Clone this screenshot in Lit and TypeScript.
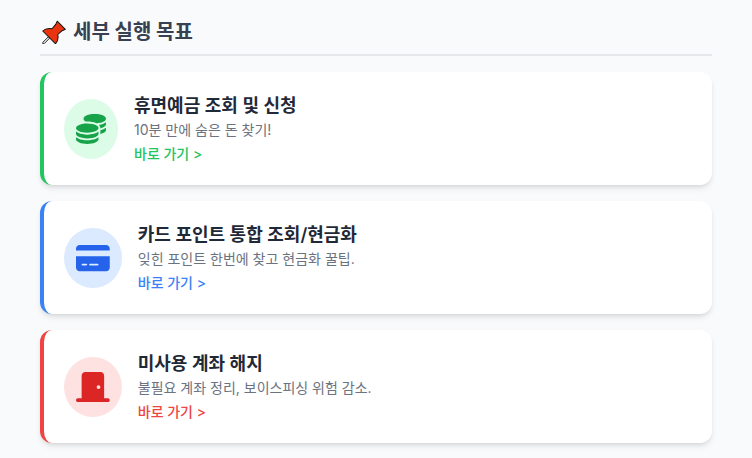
import { LitElement, html, css, svg } from 'lit'
import { customElement } from 'lit/decorators.js'

const coins = svg`<path d="M512 80c0 18-14.300 34.600-38.400 48c-29.100 16.100-72.500 27.500-122.300 30.900c-3.700-1.800-7.400-3.500-11.300-5C300.600 137.400 248.200 128 192 128c-8.300 0-16.400 .2-24.500 .6l-1.100-.6C142.300 114.600 128 98 128 80c0-44.200 86-80 192-80S512 35.800 512 80zM160.700 161.100c10.200-.7 20.700-1.100 31.300-1.100c62.200 0 117.400 12.300 152.500 31.400C369.300 204.900 384 221.700 384 240c0 4-.7 7.900-2.100 11.700c-4.600 13.200-17 25.300-35 35.500c0 0 0 0 0 0c-.1 .1-.3 .1-.4 .2l0 0 0 0c-.3 .2-.6 .3-.9 .5c-35 19.400-90.800 32-153.600 32c-59.600 0-112.900-11.300-148.200-29.100c-1.900-.9-3.700-1.900-5.500-2.900C14.300 274.600 0 258 0 240c0-34.800 53.400-64.500 128-75.400c10.500-1.500 21.400-2.700 32.700-3.500zM416 240c0-21.900-10.600-39.900-24.100-53.400c28.300-4.400 54.200-11.400 76.200-20.500c16.300-6.800 31.500-15.200 43.900-25.500V176c0 19.300-16.500 37.100-43.800 50.900c-14.600 7.400-32.400 13.700-52.400 18.500c.1-1.800 .2-3.500 .2-5.300zm-32 96c0 18-14.300 34.600-38.400 48c-1.800 1-3.600 1.900-5.500 2.900C304.900 404.700 251.600 416 192 416c-62.800 0-118.600-12.600-153.600-32C14.300 370.600 0 354 0 336V300.600c12.500 10.300 27.600 18.700 43.900 25.500C83.400 342.600 135.800 352 192 352s108.600-9.400 148.100-25.900c7.800-3.200 15.300-6.900 22.400-10.900c6.100-3.400 11.800-7.200 17.200-11.200c1.500-1.100 2.900-2.300 4.300-3.400V304v5.700V336zm32 0V304 278.100c19-4.200 36.500-9.500 52.100-16c16.300-6.800 31.500-15.200 43.900-25.500V272c0 10.500-5 21-14.900 30.900c-16.300 16.300-45 29.700-81.300 38.400c.1-1.700 .2-3.500 .2-5.300zM192 448c56.200 0 108.600-9.400 148.100-25.900c16.300-6.800 31.500-15.200 43.900-25.500V432c0 44.200-86 80-192 80S0 476.200 0 432V396.600c12.500 10.300 27.600 18.700 43.900 25.500C83.400 438.600 135.800 448 192 448z"/>`

const card = svg`<path d="M64 32C28.700 32 0 60.700 0 96v32H576V96c0-35.300-28.700-64-64-64H64zM576 224H0V416c0 35.300 28.700 64 64 64H512c35.300 0 64-28.700 64-64V224zM112 352h64c8.800 0 16 7.200 16 16s-7.200 16-16 16H112c-8.800 0-16-7.200-16-16s7.200-16 16-16zm112 16c0-8.800 7.200-16 16-16H368c8.800 0 16 7.200 16 16s-7.200 16-16 16H240c-8.800 0-16-7.200-16-16z"/>`

const door = svg`<path d="M96 64c0-35.300 28.700-64 64-64H416c35.300 0 64 28.700 64 64V448h64c17.700 0 32 14.300 32 32s-14.300 32-32 32H432 144 32c-17.700 0-32-14.300-32-32s14.300-32 32-32H96V64zM384 288a32 32 0 1 0 0-64 32 32 0 1 0 0 64z"/>`

const items = [
  {
    tone: 'green',
    title: '휴면예금 조회 및 신청',
    desc: '10분 만에 숨은 돈 찾기!',
    icon: html`<svg height="30" viewBox="0 0 512 512" fill="currentColor">${coins}</svg>`,
  },
  {
    tone: 'blue',
    title: '카드 포인트 통합 조회/현금화',
    desc: '잊힌 포인트 한번에 찾고 현금화 꿀팁.',
    icon: html`<svg height="30" viewBox="0 0 576 512" fill="currentColor">${card}</svg>`,
  },
  {
    tone: 'red',
    title: '미사용 계좌 해지',
    desc: '불필요 계좌 정리, 보이스피싱 위험 감소.',
    icon: html`<svg height="30" viewBox="0 0 576 512" fill="currentColor">${door}</svg>`,
  },
]

@customElement('app-root')
export class AppRoot extends LitElement {
  static styles = css`
    :host {
      display: block;
      height: 458px;
      overflow: hidden;
      background: #f9fafb;
      font-family: Inter, 'Noto Sans CJK KR', sans-serif;
    }
    .top-shadow {
      height: 0;
      margin: 0 40px;
      box-shadow: 0 0 15px rgba(0, 0, 0, 0.06);
    }
    main {
      padding: 17px 40px 0;
    }
    h2 {
      margin: 0 0 16px;
      height: 39px;
      box-sizing: border-box;
      padding-bottom: 8px;
      border-bottom: 2px solid #e5e7eb;
      display: flex;
      align-items: center;
      gap: 7px;
      font-size: 20px;
      line-height: 30px;
      font-weight: 700;
      color: #374151;
    }
    .pin {
      margin-left: 2px;
    }
    .cards {
      display: flex;
      flex-direction: column;
      gap: 16px;
    }
    .card {
      display: flex;
      align-items: center;
      gap: 16px;
      height: 113px;
      box-sizing: border-box;
      padding: 0 20px;
      background: #fff;
      border-radius: 12px;
      border-left: 4px solid;
      box-shadow: 0 4px 6px -1px rgba(0, 0, 0, 0.1), 0 2px 4px -2px rgba(0, 0, 0, 0.1);
    }
    .icon {
      flex: none;
      padding: 15px 12px;
      border-radius: 50%;
      display: flex;
    }
    .green { border-color: #22c55e; }
    .green .icon { background: #dcfce7; color: #16a34a; }
    .green a { color: #22c55e; }
    .blue { border-color: #3b82f6; }
    .blue .icon { background: #dbeafe; color: #2563eb; }
    .blue a { color: #3b82f6; }
    .red { border-color: #ef4444; }
    .red .icon { background: #fee2e2; color: #dc2626; }
    .red a { color: #ef4444; }
    .text {
      padding-bottom: 1px;
    }
    h3 {
      margin: 0;
      font-size: 18px;
      line-height: 28px;
      font-weight: 600;
      color: #1f2937;
    }
    p {
      margin: 0;
      font-size: 14px;
      line-height: 20px;
      color: #6b7280;
    }
    a {
      display: block;
      margin-top: 4px;
      font-size: 14px;
      line-height: 20px;
      font-weight: 500;
      text-decoration: none;
    }
  `

  render() {
    return html`
      <div class="top-shadow"></div>
      <main>
        <h2>
          <svg class="pin" width="24" height="24" viewBox="-10 -14.500 24 24">
            <g transform="rotate(45) scale(.82)">
              <path d="M-1.200 5h2.400V14.500l-1.200 1.500-1.200-1.500z" fill="#ddd" stroke="#222" stroke-width="1"/>
              <path d="M-7-16H7L5.500-12 5-5C8-3 11 0 11 5H-11C-11 0-8-3-5-5L-5.500-12z" fill="#e8340f" stroke="#111" stroke-width="1.200" stroke-linejoin="round"/>
            </g>
          </svg>
          세부 실행 목표
        </h2>
        <div class="cards">
          ${items.map(
            (item) => html`
              <div class="card ${item.tone}">
                <div class="icon">${item.icon}</div>
                <div class="text">
                  <h3>${item.title}</h3>
                  <p>${item.desc}</p>
                  <a href="#">바로 가기 &gt;</a>
                </div>
              </div>
            `,
          )}
        </div>
      </main>
    `
  }
}

declare global {
  interface HTMLElementTagNameMap {
    'app-root': AppRoot
  }
}
